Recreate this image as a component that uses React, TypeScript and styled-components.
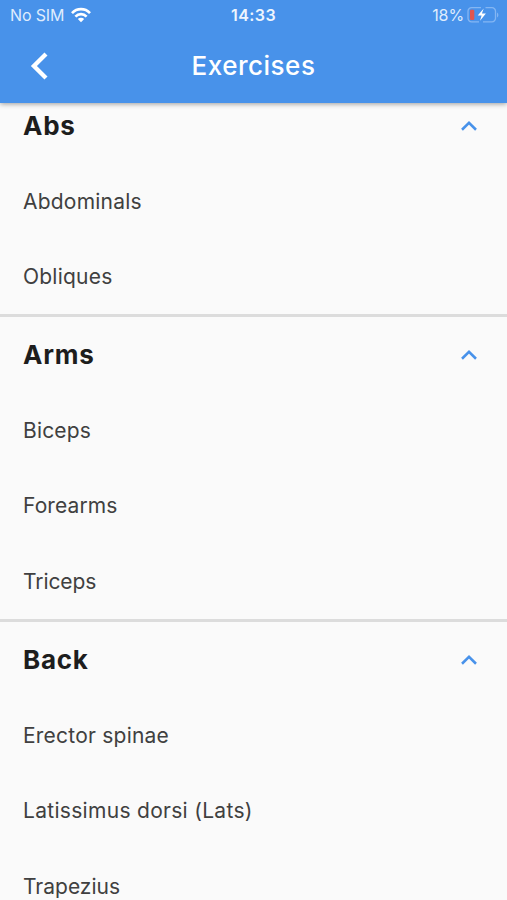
import React from "react";
import styled, { createGlobalStyle } from "styled-components";

const GlobalStyle = createGlobalStyle`
  * { box-sizing: border-box; }
  body { margin: 0; background: #fafafa; font-family: Inter, "Liberation Sans", sans-serif; }
`;

const Screen = styled.div`
  display: flex;
  flex-direction: column;
  width: 100%;
  height: 100vh;
  overflow: hidden;
  background: #fafafa;
`;

const AppBar = styled.header`
  position: relative;
  z-index: 1;
  flex: none;
  height: 103px;
  background: #4892ea;
  color: #fff;
  box-shadow: 0 1px 5px rgba(0, 0, 0, 0.38);
`;

const StatusBar = styled.div`
  display: grid;
  grid-template-columns: 1fr auto 1fr;
  align-items: center;
  height: 30px;
  padding: 0 8px 0 10px;
  font-size: 16px;
  line-height: 30px;
  color: #dfecfd;
`;

const StatusGroup = styled.div<{ $end?: boolean }>`
  display: flex;
  align-items: center;
  justify-content: ${(p) => (p.$end ? "flex-end" : "flex-start")};
  gap: ${(p) => (p.$end ? "3px" : "7px")};
  letter-spacing: ${(p) => (p.$end ? "-0.1px" : "-0.15px")};
  svg { display: block; flex: none; }
`;

const Clock = styled.span`
  margin-right: 2px;
  font-weight: 600;
  letter-spacing: 0.45px;
  color: #eef5fe;
`;

const TitleBar = styled.div`
  display: grid;
  grid-template-columns: 78px 1fr 78px;
  align-items: center;
  height: 72px;
`;

const BackButton = styled.button`
  display: flex;
  align-items: center;
  justify-content: center;
  height: 72px;
  padding: 0;
  border: 0;
  background: none;
  color: #fff;
`;

const Title = styled.h1`
  margin: 0;
  text-align: center;
  font-size: 26px;
  line-height: 72px;
  font-weight: 500;
  letter-spacing: 0.5px;
`;

const List = styled.main`
  flex: 1;
  min-height: 0;
  overflow: hidden;
`;

const Content = styled.div`
  margin-top: -15.2px;
`;

const Section = styled.section`
  border-bottom: 3px solid #dcdcdc;
  margin-bottom: -0.2px;
`;

const SectionHeader = styled.div`
  display: flex;
  align-items: center;
  justify-content: space-between;
  height: 75.5px;
  padding: 0 30px 0 23px;
  color: #4892ea;
`;

const SectionTitle = styled.h2`
  margin: 0;
  font-size: 26px;
  line-height: 32px;
  font-weight: 700;
  letter-spacing: 0.75px;
  color: #1d1d1d;
`;

const Item = styled.div<{ $tracking: number }>`
  display: flex;
  align-items: center;
  height: 75.5px;
  padding: 0 23px;
  font-size: 21px;
  letter-spacing: ${(p) => p.$tracking}px;
  color: #404040;
  white-space: nowrap;
`;

const WifiIcon = () => (
  <svg width="20" height="16" viewBox="0 0 20 16" fill="none" stroke="#fff" strokeWidth="2.7">
    <path d="M1 6.1C6 .9 14 .9 19 6.1" />
    <path d="M4.4 9.6c3.2-3.2 8-3.2 11.2 0" />
    <path d="M10 15.2 6.8 12c1.8-1.7 4.6-1.7 6.4 0z" fill="#fff" stroke="none" />
  </svg>
);

const BatteryIcon = () => (
  <svg width="32" height="18" viewBox="0 0 32 18" fill="none">
    <path d="M14 1.7H4.5A3.5 3.5 0 0 0 1 5.2v7.1a3.5 3.5 0 0 0 3.500 3.500H12M18.500 1.700H25a3.500 3.500 0 0 1 3.500 3.500v7.100a3.500 3.500 0 0 1-3.500 3.500h-9" stroke="#84b6f3" strokeWidth="1.300" />
    <path d="M30 6.500c1.800.7 1.800 4.300 0 5z" fill="#84b6f3" />
    <rect x="3" y="3.700" width="4.300" height="10.300" rx="1.300" fill="#e0564f" />
    <path d="m16.700 2.500-6 7h3.900L13 14.800l5.900-7.200h-4z" fill="#fff" />
  </svg>
);

const BackIcon = () => (
  <svg width="18" height="28" viewBox="0 0 18 28" fill="none" stroke="#fff" strokeWidth="4.300">
    <path d="M16 2 3.900 14 16 26" />
  </svg>
);

const ChevronUp = () => (
  <svg width="16" height="10" viewBox="0 0 16 10" fill="none" stroke="currentColor" strokeWidth="2.600">
    <path d="M1 8.700 8 1.900l7 6.800" />
  </svg>
);

const groups = [
  {
    name: "Abs",
    items: [
      { label: "Abdominals", tracking: 0.22 },
      { label: "Obliques", tracking: 0.22 },
    ],
  },
  {
    name: "Arms",
    items: [
      { label: "Biceps", tracking: 0.15 },
      { label: "Forearms", tracking: 0.1 },
      { label: "Triceps", tracking: -0.1 },
    ],
  },
  {
    name: "Back",
    items: [
      { label: "Erector spinae", tracking: 0.22 },
      { label: "Latissimus dorsi (Lats)", tracking: 0.3 },
      { label: "Trapezius", tracking: 0 },
    ],
  },
];

export default function App() {
  return (
    <Screen>
      <GlobalStyle />
      <AppBar>
        <StatusBar>
          <StatusGroup><span>No SIM</span><WifiIcon /></StatusGroup>
          <Clock>14:33</Clock>
          <StatusGroup $end><span>18%</span><BatteryIcon /></StatusGroup>
        </StatusBar>
        <TitleBar>
          <BackButton aria-label="Back"><BackIcon /></BackButton>
          <Title>Exercises</Title>
        </TitleBar>
      </AppBar>
      <List>
        <Content>
          {groups.map((group) => (
            <Section key={group.name}>
              <SectionHeader>
                <SectionTitle>{group.name}</SectionTitle>
                <ChevronUp />
              </SectionHeader>
              {group.items.map((item) => (
                <Item key={item.label} $tracking={item.tracking}>{item.label}</Item>
              ))}
            </Section>
          ))}
        </Content>
      </List>
    </Screen>
  );
}
